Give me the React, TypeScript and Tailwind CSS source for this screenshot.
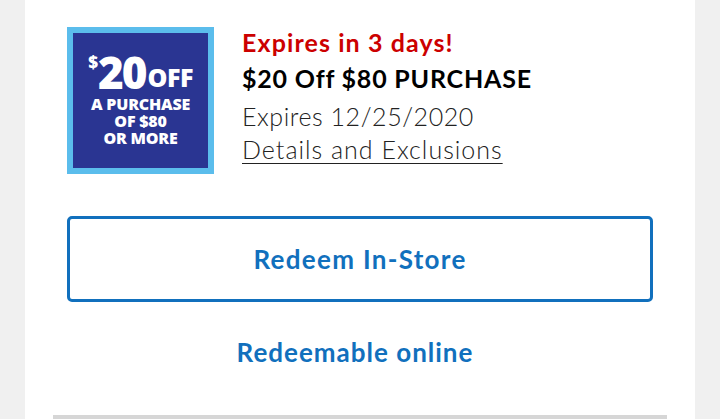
export default function App() {
  return (
    <div className="h-[419px] w-[720px] overflow-hidden bg-[#f0f0f0] font-['Lato',sans-serif]">
      <div className="mx-[25px] flex h-full flex-col bg-white">
        <div className="flex pl-[42px] pt-[27px]">
          <div className="flex h-[147px] w-[147px] shrink-0 flex-col items-center justify-center border-[6px] border-[#5bbdec] bg-[#2a3592] pb-[2px] text-white font-['Open_Sans',sans-serif] font-extrabold leading-none">
            <div className="flex items-start">
              <span className="mt-[1px] text-[17px]">$</span>
              <span className="text-[44px] leading-[40px] tracking-[-2px]">20</span>
              <span className="ml-[2px] mt-[13px] text-[25px] leading-[25px] tracking-[-0.5px]">OFF</span>
            </div>
            <div className="mt-[4px] flex flex-col items-center text-[16px] leading-[17px] tracking-[-0.2px]">
              <span>A PURCHASE</span>
              <span>OF $80</span>
              <span>OR MORE</span>
            </div>
          </div>
          <div className="-mt-[3px] ml-[28px] flex flex-col">
            <div className="text-[25px] font-bold leading-[36px] tracking-[1.1px] text-[#cc0000]">Expires in 3 days!</div>
            <div className="text-[25px] font-bold leading-[36px] tracking-[0.8px] text-black">$20 Off $80 PURCHASE</div>
            <div className="mt-[3px] text-[25px] font-light leading-[34px] tracking-[0.55px] text-[#222]">Expires 12/25/2020</div>
            <div className="text-[25px] font-light leading-[32px] tracking-[1px] text-[#222] underline decoration-1 underline-offset-[4px]">Details and Exclusions</div>
          </div>
        </div>
        <div className="mx-[42px] mt-[42px] flex h-[86px] items-center justify-center rounded-[5px] border-[3px] border-[#1170bd] text-[26px] font-bold tracking-[1.3px] text-[#1170bd]">
          Redeem In-Store
        </div>
        <div className="mt-[31px] flex justify-center pr-[10px] text-[26px] font-bold tracking-[1px] text-[#1170bd]">Redeemable online</div>
        <div className="mx-[28px] mt-auto h-[4px] bg-[#d6d6d6]" />
      </div>
    </div>
  );
}
